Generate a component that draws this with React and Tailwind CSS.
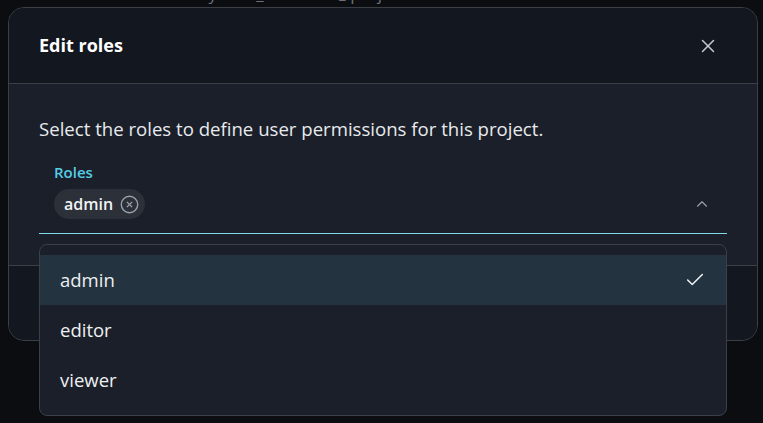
import { X, Check, ChevronUp } from 'lucide-react'

const FONT = { fontFamily: '"Open Sans", "Liberation Sans", sans-serif' }

const OPTIONS = ['admin', 'editor', 'viewer']

function RoleChip({ label }) {
  return (
    <span className="flex h-[30px] items-center gap-[7px] rounded-full bg-[#2b3039] pl-[10px] pr-[6px] text-[16px] font-semibold text-[#f1f3f5]">
      {label}
      <svg width="19" height="19" viewBox="0 0 18 18" fill="none" stroke="#9aa1ab" strokeWidth="1.3">
        <circle cx="9" cy="9" r="7.8" />
        <path d="M6.5 6.5 L11.5 11.5 M11.5 6.5 L6.5 11.5" />
      </svg>
    </span>
  )
}

export default function App() {
  return (
    <div className="relative h-[423px] w-[763px] overflow-hidden bg-[#0b0d11]" style={FONT}>
      {/* backdrop page text peeking above the modal */}
      <div className="absolute -top-[19px] left-[150px] text-[17px] text-[#6b717a]">
        Invite by user_name or @project member
      </div>

      <div className="relative ml-[8px] mt-[7px] flex h-[334px] w-[750px] flex-col overflow-hidden rounded-[16px] border border-[#3a3f48] bg-[#1a1f29]">
        <div className="flex h-[76px] shrink-0 items-center justify-between border-b border-[#3a3f48] bg-[#121720] pl-[30px] pr-[38px]">
          <h2 className="text-[18px] font-bold text-white">Edit roles</h2>
          <X size={22} strokeWidth={1.6} className="text-[#c5cbd3]" />
        </div>

        <div className="flex h-[181px] shrink-0 flex-col px-[30px] pt-[33px]">
          <p className="text-[18.6px] leading-[24px] text-[#e8eaed]">
            Select the roles to define user permissions for this project.
          </p>
          <div className="mt-[21px] flex flex-col border-b border-[#7ed8ea] px-[15px] pb-[14px]">
            <span className="text-[15px] font-semibold leading-[20px] text-[#56cde4]">Roles</span>
            <div className="mt-[7px] flex items-center justify-between">
              <RoleChip label="admin" />
              <ChevronUp size={18} strokeWidth={1.5} className="mr-[1px] text-[#9aa1ab]" />
            </div>
          </div>
        </div>

        <div className="flex-1 border-t border-[#3a3f48] bg-[#121720]" />
      </div>

      {/* open listbox */}
      <div className="absolute left-[39px] top-[244px] w-[688px] rounded-[8px] border border-[#3a3f48] bg-[#1a1f29] py-[10px]">
        {OPTIONS.map((o, i) => (
          <div
            key={o}
            className={`flex h-[50px] items-center justify-between pl-[20px] pr-[20px] text-[18.5px] font-medium text-[#eef0f2] ${
              i === 0 ? 'bg-[#233440]' : ''
            }`}
          >
            {o}
            {i === 0 && <Check size={22} strokeWidth={1.6} className="text-[#f1f3f5]" />}
          </div>
        ))}
      </div>
    </div>
  )
}
